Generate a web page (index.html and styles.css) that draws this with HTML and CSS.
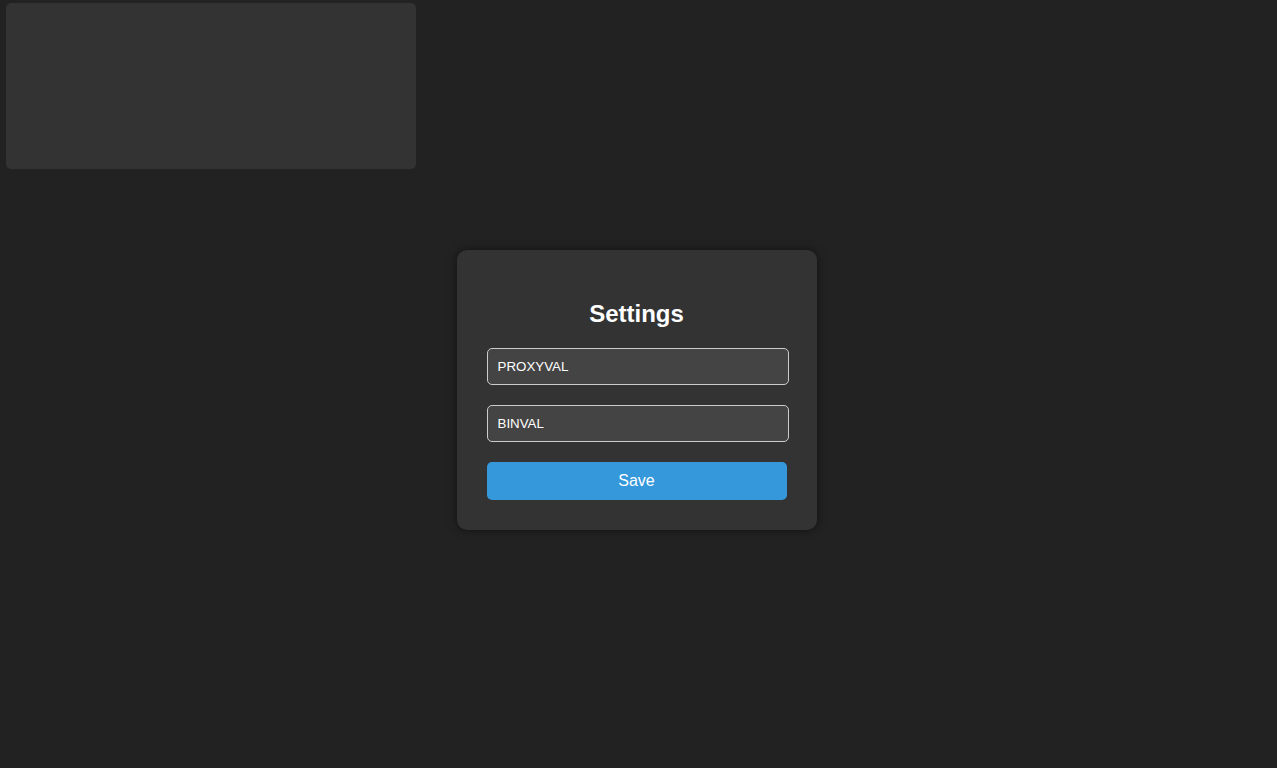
FILE: index.html
```html
<!DOCTYPE html>
<html lang="en">

<head>
   <meta charset="UTF-8">
   <meta name="viewport" content="width=device-width, initial-scale=1.0">
   <title>Settings</title>
   <link rel="stylesheet" href="styles.css">
</head>

<body>
   <div class="preview"></div>

   <div class="settings">
      <h2 class="settings__title">Settings</h2>
      <input class="settings__input" type="text" value="PROXYVAL">
      <input class="settings__input" type="text" value="BINVAL">
      <button class="settings__btn" type="button">Save</button>
   </div>
</body>

</html>
```

FILE: styles.css
```css
body {
   margin: 6px 10px 6px 6px;
   height: 100vh;
   background-color: #222222;
   color: #ffffff;
   font-family: "Liberation Sans", Arial, sans-serif;
   display: flex;
   justify-content: center;
   align-items: center;
}

.preview {
   position: absolute;
   top: 3px;
   left: 6px;
   width: 410px;
   height: 166px;
   background-color: #333333;
   border-radius: 5px;
}

.settings {
   width: 300px;
   padding: 30px;
   background-color: #333333;
   border-radius: 10px;
   box-shadow: 0 0 10px rgba(0, 0, 0, 0.5);
   text-align: center;
}

.settings__title {
   margin: 20px 0;
   font-size: 24px;
}

.settings__input {
   display: block;
   width: calc(100% - 20px);
   margin: 0 0 20px;
   padding: 10px;
   border: 1px solid #cccccc;
   border-radius: 5px;
   background-color: #444444;
   color: #ffffff;
   font-family: "Liberation Sans", Arial, sans-serif;
   font-size: 13.333px;
}

.settings__btn {
   display: block;
   width: 100%;
   padding: 10px;
   border: none;
   border-radius: 5px;
   background-color: #3498db;
   color: #ffffff;
   font-family: "Liberation Sans", Arial, sans-serif;
   font-size: 16px;
   cursor: pointer;
}
```
